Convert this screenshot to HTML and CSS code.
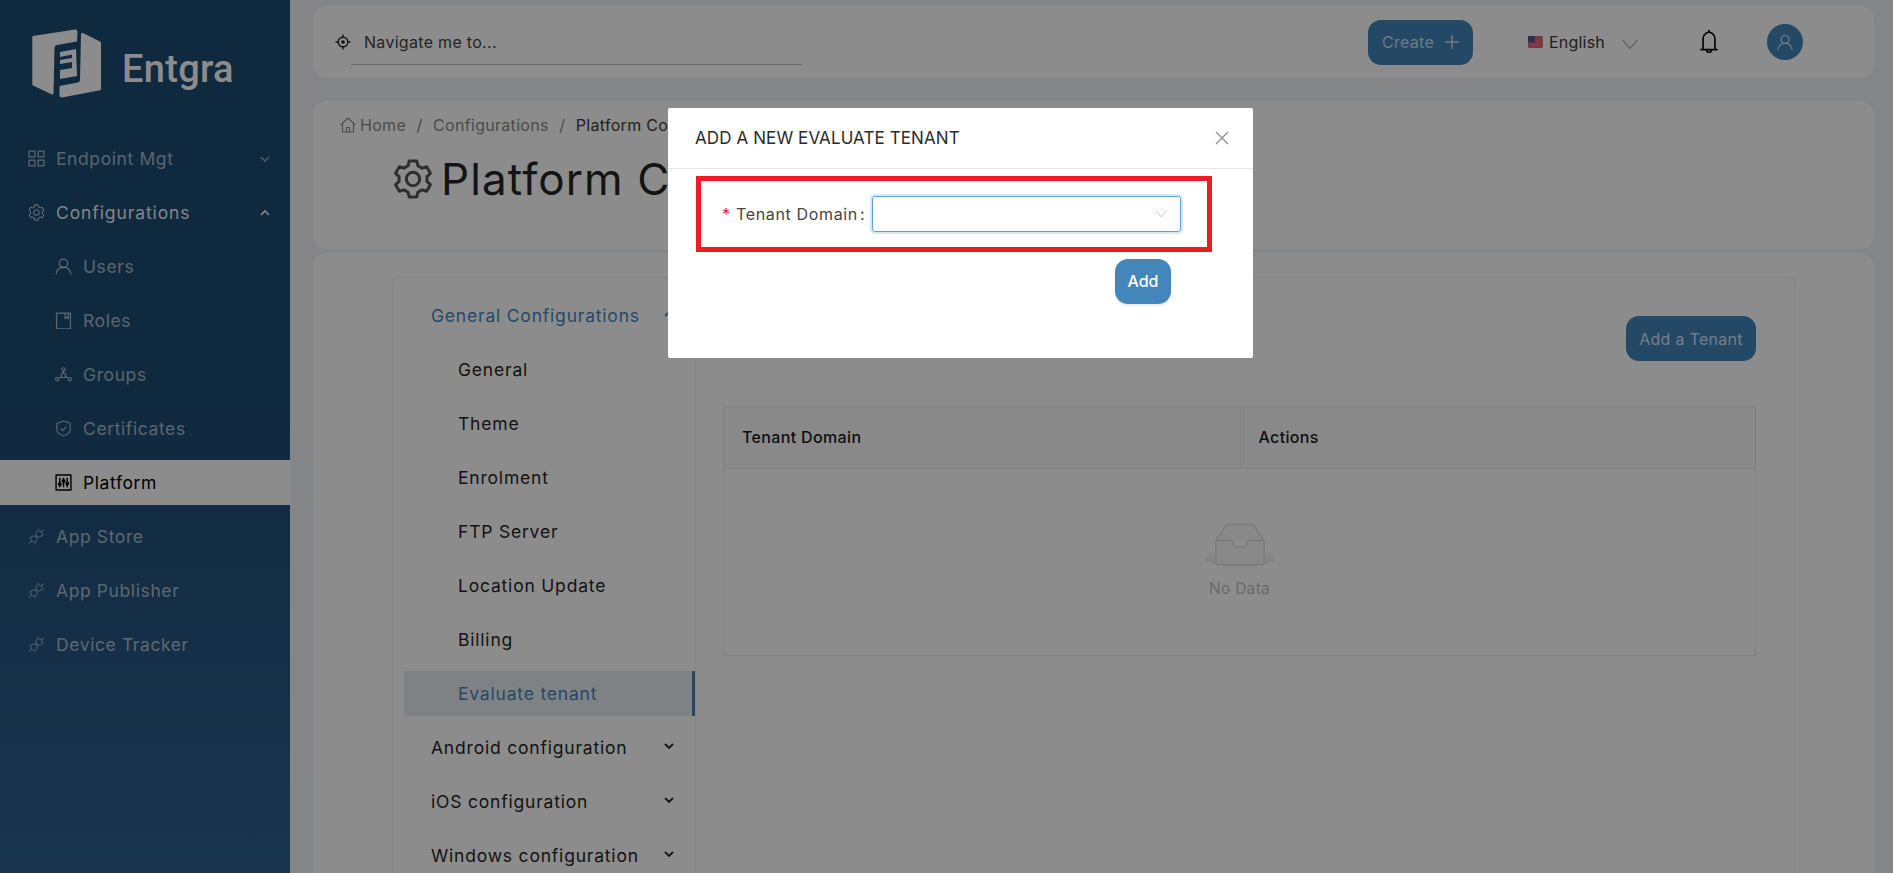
FILE: index.html
```html
<!DOCTYPE html>
<html lang="en">
<head>
<meta charset="utf-8">
<title>Platform Configurations</title>
<link rel="stylesheet" href="styles.css">
</head>
<body>
<div class="app">
  <aside class="sidebar">
    <div class="brand">
      <svg class="logo" viewBox="32 29 70 69">
        <path class="logo-fill" d="M33 36L75 29.500Q77.500 29.500 77.500 32L77 41.500L57 45Q54.500 45.500 54.500 48L53.500 93.500Q53 95 51 94L33 85.500Q32.300 85 32.300 84V37Q32.300 36.300 33 36Z"/>
        <path class="logo-fill" d="M83 33L100 41.500Q101 42 101 43V89Q101 90 100 90.200L62 97.400Q59.500 97.500 59.500 95.500V86L78 82.500Q80 82 80 80L81 34Q81.500 32.500 83 33Z"/>
        <path class="logo-fill" d="M60 52L76 49L77 76L60 79V70L72 68V62L60 64V60L72 58V54.500L60 57Z"/>
      </svg>
      <span class="brand-name">Entgra</span>
    </div>
    <nav class="side-nav">
      <a class="side-item muted">
        <svg class="ico" viewBox="0 0 16 16"><rect x="1" y="1" width="5.500" height="5.500"/><rect x="9.500" y="1" width="5.500" height="5.500"/><rect x="1" y="9.500" width="5.500" height="5.500"/><rect x="9.500" y="9.500" width="5.500" height="5.500"/></svg>
        <span class="side-label">Endpoint Mgt</span>
        <svg class="caret" viewBox="0 0 12 12"><path d="M2 4l4 4 4-4"/></svg>
      </a>
      <a class="side-item open">
        <svg class="ico" viewBox="0 0 24 24"><path d="M9.090 4.010L9.710 1.240H14.290L14.910 4.010L17.460 5.490L20.170 4.640L22.460 8.600L20.370 10.520V13.480L22.460 15.400L20.170 19.360L17.460 18.510L14.910 19.990L14.290 22.760H9.710L9.090 19.990L6.540 18.510L3.830 19.360L1.540 15.400L3.630 13.480V10.520L1.540 8.600L3.830 4.640L6.540 5.490Z"/><circle cx="12" cy="12" r="4"/></svg>
        <span class="side-label">Configurations</span>
        <svg class="caret" viewBox="0 0 12 12"><path d="M2 8l4-4 4 4"/></svg>
      </a>
      <a class="side-item sub muted">
        <svg class="ico" viewBox="0 0 16 16"><circle cx="8" cy="5" r="4"/><path d="M1 15.500a7 7 0 0 1 14 0"/></svg>
        <span class="side-label">Users</span>
      </a>
      <a class="side-item sub muted">
        <svg class="ico" viewBox="0 0 16 16"><path d="M1.500 1h13v15h-13zM9.500 1v5l1.500-1 1.500 1V1"/></svg>
        <span class="side-label">Roles</span>
      </a>
      <a class="side-item sub muted">
        <svg class="ico" viewBox="0 0 18 16"><circle cx="9" cy="2.500" r="1.700"/><circle cx="9" cy="9" r="2.500"/><circle cx="2.300" cy="13" r="1.700"/><circle cx="15.700" cy="13" r="1.700"/><path d="M9 4.200V6.500M6.800 10.300L3.800 12.100M11.200 10.300L14.200 12.100"/></svg>
        <span class="side-label">Groups</span>
      </a>
      <a class="side-item sub muted">
        <svg class="ico" viewBox="0 0 16 18"><path d="M8 1L15 3.500V10Q15 14 8 17Q1 14 1 10V3.500Z"/><path d="M5 9l2.200 2.200L11 7"/></svg>
        <span class="side-label">Certificates</span>
      </a>
      <a class="side-item sub active">
        <svg class="ico ico-strong" viewBox="0 0 16 16"><rect x="1" y="1" width="14" height="14"/><path d="M4.500 3.500v9M8 3.500v9M11.500 3.500v9"/><circle cx="4.500" cy="9.500" r="1.200"/><circle cx="8" cy="6.500" r="1.200"/><circle cx="11.500" cy="9" r="1.200"/></svg>
        <span class="side-label">Platform</span>
      </a>
      <a class="side-item muted">
        <svg class="ico" viewBox="0 0 24 24"><circle cx="8.500" cy="15.500" r="4.500"/><circle cx="15.500" cy="8.500" r="4.500"/><path d="M1 21.500L5 19M23 2.500L19 5M13 3L15 1M21 11L23 9M1 15L3 13M9 23L11 21"/></svg>
        <span class="side-label">App Store</span>
      </a>
      <a class="side-item muted">
        <svg class="ico" viewBox="0 0 24 24"><circle cx="8.500" cy="15.500" r="4.500"/><circle cx="15.500" cy="8.500" r="4.500"/><path d="M1 21.500L5 19M23 2.500L19 5M13 3L15 1M21 11L23 9M1 15L3 13M9 23L11 21"/></svg>
        <span class="side-label">App Publisher</span>
      </a>
      <a class="side-item muted">
        <svg class="ico" viewBox="0 0 24 24"><circle cx="8.500" cy="15.500" r="4.500"/><circle cx="15.500" cy="8.500" r="4.500"/><path d="M1 21.500L5 19M23 2.500L19 5M13 3L15 1M21 11L23 9M1 15L3 13M9 23L11 21"/></svg>
        <span class="side-label">Device Tracker</span>
      </a>
    </nav>
  </aside>

  <main class="main">
    <header class="topbar">
      <div class="nav-search">
        <svg class="aim" viewBox="0 0 16 16"><circle cx="8" cy="8" r="4.800"/><circle class="aim-dot" cx="8" cy="8" r="1.800"/><path d="M8 .5v2.700M8 12.800v2.700M.5 8h2.700M12.800 8h2.700"/></svg>
        <span class="nav-text">Navigate me to...</span>
      </div>
      <button class="btn btn-dark create">Create
        <svg class="plus" viewBox="0 0 14 14"><path d="M7 0v14M0 7h14"/></svg>
      </button>
      <div class="lang">
        <svg class="flag" viewBox="0 0 15 12"><rect width="15" height="12" rx="1.500" class="flag-red"/><rect width="7" height="6.500" class="flag-blue"/></svg>
        <span class="lang-text">English</span>
        <svg class="lang-caret" viewBox="0 0 16 10"><path d="M.5 1L8 9.500 15.500 1"/></svg>
      </div>
      <svg class="bell" viewBox="0 0 18 24"><path d="M1 19H17M3.500 19V9.500A5.500 6.500 0 0 1 14.500 9.500V19M9 3V1M7 19.500A2 2 0 0 0 11 19.500"/></svg>
      <span class="avatar"><svg class="avatar-ico" viewBox="0 0 16 16"><circle cx="8" cy="5" r="4"/><path d="M1 15.500a7 7 0 0 1 14 0"/></svg></span>
    </header>

    <section class="title-card">
      <div class="crumbs">
        <svg class="home" viewBox="0 0 16 16"><path d="M.5 8L8 1l7.500 7M2.500 6.500V15h11V6.500M6.500 15v-4.500h3V15"/></svg>
        <span class="crumb">Home</span><span class="slash">/</span>
        <span class="crumb">Configurations</span><span class="slash">/</span>
        <span class="crumb current">Platform Configurations</span>
      </div>
      <h1 class="page-title">
        <svg class="title-gear" viewBox="0 0 24 24"><path d="M9.090 4.010L9.710 1.240H14.290L14.910 4.010L17.460 5.490L20.170 4.640L22.460 8.600L20.370 10.520V13.480L22.460 15.400L20.170 19.360L17.460 18.510L14.910 19.990L14.290 22.760H9.710L9.090 19.990L6.540 18.510L3.830 19.360L1.540 15.400L3.630 13.480V10.520L1.540 8.600L3.830 4.640L6.540 5.490Z"/><circle cx="12" cy="12" r="4"/></svg>
        Platform Configurations
      </h1>
    </section>

    <section class="content-card">
      <div class="inner-card">
        <nav class="menu">
          <a class="menu-head blue">General Configurations<svg class="menu-caret" viewBox="0 0 12 12"><path d="M2 8l4-4 4 4"/></svg></a>
          <a class="menu-sub">General</a>
          <a class="menu-sub">Theme</a>
          <a class="menu-sub">Enrolment</a>
          <a class="menu-sub">FTP Server</a>
          <a class="menu-sub">Location Update</a>
          <a class="menu-sub">Billing</a>
          <a class="menu-sub selected">Evaluate tenant</a>
          <a class="menu-head">Android configuration<svg class="menu-caret" viewBox="0 0 12 12"><path d="M2 4l4 4 4-4"/></svg></a>
          <a class="menu-head">iOS configuration<svg class="menu-caret" viewBox="0 0 12 12"><path d="M2 4l4 4 4-4"/></svg></a>
          <a class="menu-head">Windows configuration<svg class="menu-caret" viewBox="0 0 12 12"><path d="M2 4l4 4 4-4"/></svg></a>
        </nav>
        <div class="panel">
          <div class="panel-actions"><button class="btn btn-mid">Add a Tenant</button></div>
          <div class="table">
            <div class="thead">
              <div class="th">Tenant Domain</div>
              <div class="th">Actions</div>
            </div>
            <div class="empty">
              <svg class="empty-ico" viewBox="0 0 64 41">
                <ellipse class="empty-shadow" cx="32" cy="33" rx="32" ry="7"/>
                <path class="empty-line" d="M10 16L20 1H44L54 16V36Q54 38 52 38H12Q10 38 10 36ZM10 16H24Q26 16 26 19Q26 22 29 22H35Q38 22 38 19Q38 16 40 16H54"/>
              </svg>
              <span class="empty-text">No Data</span>
            </div>
          </div>
        </div>
      </div>
    </section>
  </main>
</div>

<div class="overlay"></div>

<div class="modal">
  <div class="modal-head">
    <span class="modal-title">ADD A NEW EVALUATE TENANT</span>
    <svg class="modal-close" viewBox="0 0 14 14"><path d="M1 1l12 12M13 1L1 13"/></svg>
  </div>
  <div class="modal-body">
    <div class="form-row">
      <label class="form-label"><span class="req">*</span>Tenant Domain<span class="colon">:</span></label>
      <div class="select"><svg class="select-caret" viewBox="0 0 14 9"><path d="M1 1l6 7 6-7"/></svg></div>
    </div>
    <div class="form-actions"><button class="btn btn-primary">Add</button></div>
  </div>
  <div class="highlight"></div>
</div>
</body>
</html>
```

FILE: styles.css
```css
* { box-sizing: border-box; }
html, body { margin: 0; height: 100%; overflow: hidden; }
body { font-family: Inter, "Liberation Sans", sans-serif; font-size: 17.500px; color: #262626; background: #f0f2f5; }
svg { display: block; flex: none; fill: none; stroke: currentColor; }
button { font: inherit; border: 0; cursor: pointer; }
a { color: inherit; }

.app { display: flex; height: 873px; overflow: hidden; }

/* sidebar */
.sidebar { width: 290px; flex: none; height: 100%; background: linear-gradient(180deg, #1d4b73 0%, #1d4b73 45%, #2e628f 100%); color: #fff; }
.brand { height: 136px; padding: 29px 0 0 32px; display: flex; align-items: flex-start; gap: 20px; }
.logo { width: 70px; height: 69px; stroke: none; }
.logo-fill { fill: #fff; fill-rule: evenodd; }
.brand-name { font-family: Roboto, sans-serif; font-size: 38px; font-weight: 500; line-height: 48px; margin-top: 16px; letter-spacing: .3px; color: #fff; }
.side-nav { display: flex; flex-direction: column; gap: 9px; }
.side-item { height: 45px; display: flex; align-items: center; padding-left: 28px; letter-spacing: .6px; position: relative; }
.side-item.sub { padding-left: 55px; }
.side-item.muted { color: rgba(255, 255, 255, .62); }
.side-item.open { color: rgba(255, 255, 255, .95); letter-spacing: .9px; }
.side-item.active { background: #fff; color: #000; }
.ico { width: 17px; height: 17px; margin-right: 11px; stroke-width: 1.2; stroke-linejoin: round; }
.ico-strong { stroke-width: 1.300; }
.side-label { flex: 1; }
.caret { width: 12px; height: 12px; margin-right: 19px; stroke-width: 1.600; }
.side-item.muted .caret { opacity: .8; }

/* main column */
.main { flex: 1; min-width: 0; padding: 6px 19px 0 23px; display: flex; flex-direction: column; }
.topbar { height: 72px; flex: none; background: #fff; border-radius: 14px; display: flex; align-items: center; padding: 0 0 0 22px; margin-bottom: 23px; }
.nav-search { width: 467px; height: 54px; margin-top: 1px; display: flex; align-items: center; position: relative; }
.nav-search::after { content: ""; position: absolute; left: 16px; right: 0; bottom: 5px; border-bottom: 1px solid #bfbfbf; }
.aim { width: 16px; height: 16px; margin-bottom: 2px; stroke: #262626; stroke-width: 1.400; }
.aim-dot { fill: #262626; stroke: none; }
.nav-text { margin: 0 0 2px 13px; font-size: 16px; letter-spacing: .3px; color: #444; }
.btn { color: #fff; border-radius: 13px; display: inline-flex; align-items: center; justify-content: center; }
.btn-dark { background: #4286bc; }
.create { width: 105px; height: 45px; margin-left: 566px; font-size: 16px; letter-spacing: .3px; gap: 11px; color: rgba(255, 255, 255, .72); }
.plus { width: 14px; height: 14px; stroke-width: 1.500; }
.lang { display: flex; align-items: center; margin-left: 55px; }
.flag { width: 15px; height: 12px; stroke: none; }
.flag-red { fill: #e06a78; }
.flag-blue { fill: #4a5a95; }
.lang-text { margin-left: 6px; font-size: 16px; letter-spacing: .2px; color: #3a3a3a; }
.lang-caret { width: 16px; height: 10px; margin: 3px 0 0 17px; stroke: #999; stroke-width: 1.100; }
.bell { width: 20px; height: 26px; margin-left: 61px; stroke: #000; stroke-width: 1.500; }
.avatar { width: 36px; height: 36px; margin-left: 48px; border-radius: 50%; background: #4286bc; display: flex; align-items: center; justify-content: center; }
.avatar-ico { width: 16px; height: 17px; stroke: #fff; stroke-width: 1.200; opacity: .8; }

.title-card { height: 148px; flex: none; background: #fff; border-radius: 14px; padding: 12px 0 0 27px; margin-bottom: 4px; overflow: hidden; }
.crumbs { display: flex; align-items: center; height: 24px; font-size: 16px; letter-spacing: .3px; color: #8a8a8a; }
.home { width: 16px; height: 16px; margin-right: 4px; stroke-width: 1.100; }
.slash { margin: 0 10.500px; }
.crumb.current { color: #3d3d3d; white-space: nowrap; }
.page-title { margin: 14px 0 0 53px; display: flex; align-items: center; gap: 8px; font-size: 44px; font-weight: 400; letter-spacing: 1.100px; line-height: 56px; color: #262626; white-space: nowrap; }
.title-gear { width: 40px; height: 44px; stroke: #555; stroke-width: 1.800; stroke-linejoin: round; }

.content-card { flex: 1; background: #fff; border-radius: 14px 14px 0 0; padding: 24px 79px 0; min-height: 0; }
.inner-card { display: flex; height: 640px; border: 1px solid #eceef0; border-radius: 4px; padding-top: 15px; }

/* settings menu */
.menu { width: 303px; flex: none; display: flex; flex-direction: column; gap: 9px; border-right: 1px solid #f0f0f0; height: 630px; overflow: visible; }
.menu-head { height: 45px; flex: none; padding: 0 20px 0 38px; display: flex; align-items: center; justify-content: space-between; letter-spacing: .8px; color: #262626; white-space: nowrap; }
.menu-head.blue { color: #4286bc; }
.menu-caret { width: 12px; height: 12px; stroke-width: 1.900; margin-bottom: 4px; }
.menu-sub { height: 45px; flex: none; margin-left: 11px; padding-left: 54px; display: flex; align-items: center; letter-spacing: .8px; color: #262626; }
.menu-sub.selected { background: #e7edf3; color: #4286bc; border-right: 3px solid #4286bc; }

/* table panel */
.panel { flex: 1; min-width: 0; padding: 23px 38px 0 27px; }
.panel-actions { display: flex; justify-content: flex-end; height: 45px; margin-bottom: 45px; }
.btn-mid { background: #4286bc; width: 130px; height: 45px; font-size: 16px; letter-spacing: .3px; color: rgba(255, 255, 255, .8); }
.table { border: 1px solid #e8e8e8; height: 250px; }
.thead { display: grid; grid-template-columns: 1fr 1fr; height: 62px; background: #fafafa; border-bottom: 1px solid #e8e8e8; }
.th { display: flex; align-items: center; padding: 0 0 2px 18px; font-size: 16px; font-weight: 450; letter-spacing: .35px; color: #1a1a1a; }
.th + .th { border-left: 1px solid #eee; }
.empty { display: flex; flex-direction: column; align-items: center; padding-top: 54px; }
.empty-ico { width: 70px; height: 45px; }
.empty-shadow { fill: #f3f3f3; stroke: none; }
.empty-line { stroke: #d9d9d9; stroke-width: 1; fill: #fafafa; }
.empty-text { margin-top: 11px; font-size: 15.500px; letter-spacing: .3px; color: #bfbfbf; }

/* modal */
.overlay { position: fixed; inset: 0; background: rgba(0, 0, 0, .45); }
.modal { position: fixed; left: 668px; top: 108px; width: 585px; height: 250px; background: #fff; border-radius: 2px; color: #262626; }
.modal-head { height: 61px; border-bottom: 1px solid #e8e8e8; padding: 0 24px 0 27px; display: flex; align-items: center; justify-content: space-between; }
.modal-title { font-size: 17px; letter-spacing: .1px; color: #2b2b2b; }
.modal-close { width: 14px; height: 14px; stroke: #8c8c8c; stroke-width: 1.200; }
.modal-body { padding: 27px 72px 0 54px; }
.form-row { display: flex; align-items: center; height: 36px; }
.form-label { width: 150px; flex: none; font-size: 16px; letter-spacing: .65px; color: #444; display: flex; align-items: center; white-space: nowrap; }
.req { color: #f5222d; width: 14px; flex: none; }
.colon { margin-left: 2px; letter-spacing: 0; }
.select { flex: 1; height: 36px; border: 1px solid #5fa3d3; border-radius: 3px; box-shadow: 0 0 0 2px rgba(66, 134, 188, .2); display: flex; align-items: center; justify-content: flex-end; padding-right: 12px; }
.select-caret { width: 13px; height: 8px; stroke: #bfbfbf; stroke-width: 1; }
.form-actions { display: flex; justify-content: flex-end; margin-top: 27px; padding-right: 10px; }
.btn-primary { background: #4286bc; width: 56px; height: 45px; padding-bottom: 2px; font-size: 16px; font-weight: 500; box-shadow: 0 2px 2px rgba(0, 0, 0, .08); }
.highlight { position: absolute; left: 28px; top: 68px; width: 516px; height: 76px; border: 5px solid #ed1c24; }
```
